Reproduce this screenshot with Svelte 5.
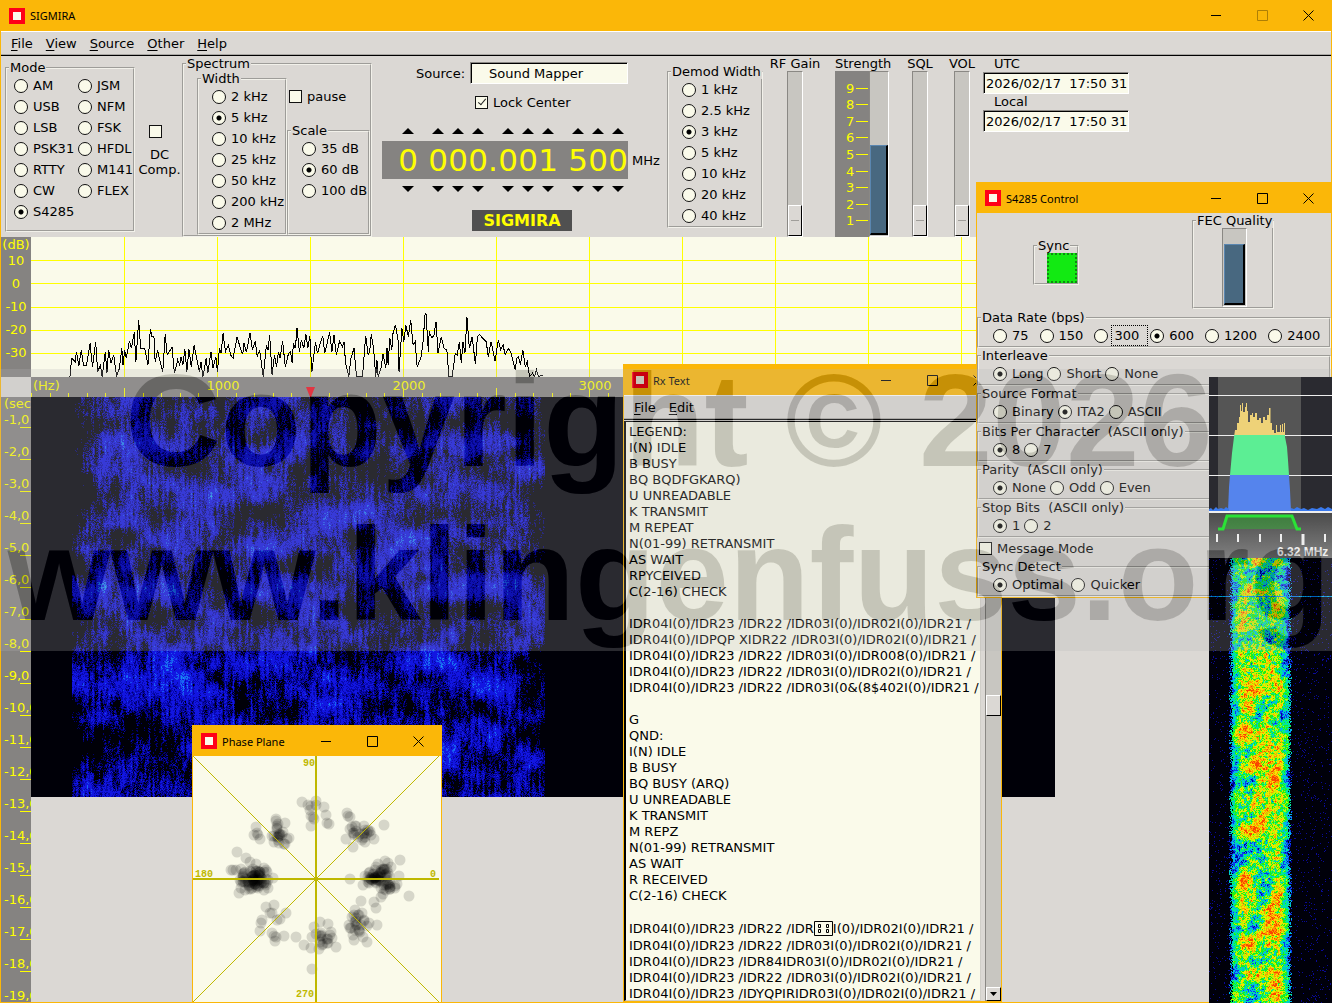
<script lang="ts">
	import { onMount } from 'svelte';

	type Point = [number, number];
	type Cluster = [x: number, y: number, spreadX: number, spreadY: number, count: number];

	const modes = ['AM', 'USB', 'LSB', 'PSK31', 'RTTY', 'CW', 'S4285', 'JSM', 'NFM', 'FSK', 'HFDL', 'M141', 'FLEX'];
	const widths = ['2 kHz', '5 kHz', '10 kHz', '25 kHz', '50 kHz', '200 kHz', '2 MHz'];
	const scales = ['35 dB', '60 dB', '100 dB'];
	const demodWidths = ['1 kHz', '2.5 kHz', '3 kHz', '5 kHz', '10 kHz', '20 kHz', '40 kHz'];
	const frequency = [...'0 000.001 500'];
	const dbLabels = ['10', '0', '-10', '-20', '-30'];
	const secLabels = Array.from({ length: 19 }, (_, i) => `-${i + 1},0`);

	const decoder = [
		{ key: 'interleave', title: 'Interleave', options: ['Long', 'Short', 'None'] },
		{ key: 'format', title: 'Source Format', options: ['Binary', 'ITA2', 'ASCII'] },
		{ key: 'bits', title: 'Bits Per Character  (ASCII only)', options: ['8', '7'] },
		{ key: 'parity', title: 'Parity  (ASCII only)', options: ['None', 'Odd', 'Even'] },
		{ key: 'stop', title: 'Stop Bits  (ASCII only)', options: ['1', '2'] }
	];

	let sel: Record<string, string> = $state({
		mode: 'S4285',
		width: '5 kHz',
		scale: '60 dB',
		demod: '3 kHz',
		rate: '600',
		interleave: 'Long',
		format: 'ITA2',
		bits: '8',
		parity: 'None',
		stop: '1',
		sync: 'Optimal'
	});

	// \u0080 marks an undecodable character, drawn as a boxed glyph
	const rxLines = [
		'LEGEND:',
		'I(N) IDLE',
		'B BUSY',
		'BQ BQDFGKARQ)',
		'U UNREADABLE',
		'K TRANSMIT',
		'M REPEAT',
		'N(01-99) RETRANSMIT',
		'AS WAIT',
		'RPYCEIVED',
		'C(2-16) CHECK',
		'',
		'IDR04I(0)/IDR23 /IDR22 /IDR03I(0)/IDR02I(0)/IDR21 /',
		'IDR04I(0)/IDPQP XIDR22 /IDR03I(0)/IDR02I(0)/IDR21 /',
		'IDR04I(0)/IDR23 /IDR22 /IDR03I(0)/IDR008(0)/IDR21 /',
		'IDR04I(0)/IDR23 /IDR22 /IDR03I(0)/IDR02I(0)/IDR21 /',
		'IDR04I(0)/IDR23 /IDR22 /IDR03I(0&(8$402I(0)/IDR21 /',
		'',
		'G',
		'QND:',
		'I(N) IDLE',
		'B BUSY',
		'BQ BUSY (ARQ)',
		'U UNREADABLE',
		'K TRANSMIT',
		'M REPZ',
		'N(01-99) RETRANSMIT',
		'AS WAIT',
		'R RECEIVED',
		'C(2-16) CHECK',
		'',
		'IDR04I(0)/IDR23 /IDR22 /IDR\u0080I(0)/IDR02I(0)/IDR21 /',
		'IDR04I(0)/IDR23 /IDR22 /IDR03I(0)/IDR02I(0)/IDR21 /',
		'IDR04I(0)/IDR23 /IDR84IDR03I(0)/IDR02I(0)/IDR21 /',
		'IDR04I(0)/IDR23 /IDR22 /IDR03I(0)/IDR02I(0)/IDR21 /',
		'IDR04I(0)/IDR23 /IDYQPIRIDR03I(0)/IDR02I(0)/IDR21 /'
	];

	const trace =
		'174,425 178,370 187,380 190,350 196,393 202,346 208,393 215,393 224,325 230,395 238,322 243,410 250,390 254,425 262,350 266,415 270,345 276,385 283,360 290,425 297,400 303,340 306,390 310,345 314,370 322,318 327,340 334,292 338,380 345,256 350,340 360,340 368,390 374,283 378,305 383,305 386,382 392,345 398,378 405,410 411,298 416,360 428,337 434,415 442,375 447,390 450,365 455,390 460,343 465,410 470,343 476,395 483,330 490,375 496,410 500,380 505,425 513,370 517,415 525,350 530,400 537,365 541,410 546,340 550,355 555,295 561,350 568,330 574,360 580,370 590,305 598,340 604,358 607,323 613,352 622,295 628,345 635,318 640,365 646,345 655,425 663,330 667,345 671,300 677,420 683,360 688,395 693,350 697,370 703,318 710,395 718,355 723,350 727,385 730,325 735,340 739,280 745,350 750,315 756,340 761,297 766,340 771,302 776,412 785,320 790,355 797,325 803,302 808,355 814,325 820,292 826,350 831,300 837,360 845,318 852,335 856,322 860,385 868,425 873,370 881,340 887,425 902,425 910,302 916,360 920,348 924,298 930,345 935,425 938,375 941,425 948,400 953,358 960,400 963,340 966,390 970,308 975,345 978,295 984,270 991,320 993,412 1000,280 1005,320 1010,270 1016,305 1022,255 1028,330 1033,320 1038,395 1047,370 1052,330 1058,235 1060,235 1066,350 1068,290 1075,310 1080,300 1085,260 1090,355 1098,305 1105,340 1112,345 1117,425 1125,425 1133,355 1138,360 1143,320 1148,385 1152,320 1157,355 1162,246 1168,340 1175,305 1183,388 1188,305 1193,298 1200,308 1210,320 1215,365 1222,320 1232,378 1240,315 1246,345 1252,330 1257,360 1265,340 1272,355 1282,405 1286,370 1290,365 1295,390 1301,345 1307,395 1312,380 1318,425 1325,415 1330,425 1335,405 1340,425 1350,420';

	const phaseClusters: Cluster[] = [
		[192, 475, 48, 40, 60],
		[185, 480, 72, 62, 30],
		[547, 475, 36, 24, 26],
		[580, 460, 32, 34, 16],
		[598, 497, 26, 34, 16],
		[575, 480, 60, 74, 14],
		[518, 342, 36, 34, 20],
		[268, 325, 24, 26, 9],
		[265, 358, 28, 28, 12],
		[397, 660, 40, 24, 16],
		[505, 610, 34, 50, 24]
	];
	const phasePoints: Point[] = [
		[337, 246], [362, 258], [377, 242], [360, 270], [403, 260], [368, 290], [372, 298], [362, 288], [408, 285],
		[412, 308], [416, 312], [364, 318], [355, 256], [378, 255], [470, 278], [480, 292], [474, 288], [487, 322],
		[480, 326], [581, 316], [552, 358], [467, 357], [490, 380], [498, 318], [198, 322], [202, 340], [210, 358],
		[192, 345], [204, 345], [259, 298], [284, 310], [296, 355], [142, 397], [167, 413], [129, 450], [228, 562],
		[240, 578], [253, 556], [287, 578], [215, 600], [213, 608], [262, 600], [270, 598], [210, 632], [245, 580],
		[252, 648], [258, 650], [282, 648], [255, 662], [246, 640], [318, 651], [343, 676], [367, 747], [439, 680],
		[390, 607], [413, 612], [372, 622], [366, 650], [388, 688], [362, 685], [514, 544], [553, 546], [559, 565],
		[561, 615], [532, 667], [517, 580], [518, 652], [480, 478], [656, 529], [631, 421], [628, 467], [578, 522],
		[586, 424]
	];

	function makeRandom(seed: number) {
		return () => {
			seed = (seed + 0x6d2b79f5) | 0;
			let t = Math.imul(seed ^ (seed >>> 15), 1 | seed);
			t = (t + Math.imul(t ^ (t >>> 7), 61 | t)) ^ t;
			return ((t ^ (t >>> 14)) >>> 0) / 4294967296;
		};
	}

	function constellation(): Point[] {
		const rnd = makeRandom(4285);
		const pts = [...phasePoints];
		for (const [x, y, sx, sy, n] of phaseClusters) {
			for (let i = 0; i < n; i++) {
				pts.push([x + (rnd() + rnd() - 1) * sx, y + (rnd() + rnd() - 1) * sy]);
			}
		}
		return pts.map(([x, y]) => [Math.round(x / 3 - 3), Math.round(y / 3 - 36)]);
	}
	const dots = constellation();

	// Smooth value noise on a cell grid of cw x ch pixels.
	function makeNoise(seed: number, cw: number, ch: number) {
		const rnd = makeRandom(seed);
		const table = Array.from({ length: 4096 }, rnd);
		const at = (x: number, y: number) => table[(x * 53 + y * 197) & 4095];
		return (px: number, py: number) => {
			const x = px / cw;
			const y = py / ch;
			const xi = Math.floor(x);
			const yi = Math.floor(y);
			const fx = (x - xi) * (x - xi) * (3 - 2 * (x - xi));
			const fy = (y - yi) * (y - yi) * (3 - 2 * (y - yi));
			const a = at(xi, yi) * (1 - fx) + at(xi + 1, yi) * fx;
			const b = at(xi, yi + 1) * (1 - fx) + at(xi + 1, yi + 1) * fx;
			return a * (1 - fy) + b * fy;
		};
	}

	function paint(canvas: HTMLCanvasElement, color: (x: number, y: number) => number[]) {
		const ctx = canvas.getContext('2d')!;
		const img = ctx.createImageData(canvas.width, canvas.height);
		let i = 0;
		for (let y = 0; y < canvas.height; y++) {
			for (let x = 0; x < canvas.width; x++) {
				const [r, g, b] = color(x, y);
				img.data[i++] = r;
				img.data[i++] = g;
				img.data[i++] = b;
				img.data[i++] = 255;
			}
		}
		ctx.putImageData(img, 0, 0);
	}

	let mainFall: HTMLCanvasElement;
	let bandFall: HTMLCanvasElement;

	function paintMain() {
		const rnd = makeRandom(7);
		const patch = makeNoise(11, 46, 24);
		const blotch = makeNoise(12, 14, 14);
		const streak = makeNoise(13, 2, 9);
		const column = makeNoise(14, 2, 2000);
		paint(mainFall, (x, y) => {
			const edge = Math.min(1, (x - 40) / 30, (514 - x) / 26);
			if (edge <= 0) return [0, 0, 8];
			let v = patch(x, y) * 0.62 + blotch(x, y) * 0.42 + streak(x, y) * 0.38 + column(x, y) * 0.22;
			v = (v - 0.66) * 2 + (rnd() - 0.5) * 0.7 - (1 - edge) * 0.45;
			if (v < 0.06) return [0, 0, 8];
			if (v > 1.2) return [24, 70 + (v - 1.2) * 160, 240];
			if (v > 0.6) return [18, 22, 225];
			return v > 0.3 ? [8, 8, 175] : [0, 0, 110];
		});
	}

	const ramp = [
		[0, 0, 8], [0, 0, 150], [10, 60, 235], [0, 180, 235], [0, 235, 150], [30, 240, 20], [190, 245, 0],
		[250, 225, 0], [255, 150, 0], [250, 70, 0]
	];

	function paintBand() {
		const rnd = makeRandom(21);
		const slope = makeNoise(22, 12, 16);
		const fine = makeNoise(23, 3, 3);
		paint(bandFall, (x, y) => {
			if (y === 38) return rnd() > 0.3 ? [0, 120, 240] : [0, 200, 230];
			const left = 19 + rnd() * 5;
			const right = 83 - rnd() * 5;
			if (x < left || x > right) {
				return rnd() > 0.96 ? [10, 10, 150] : [0, 0, 10];
			}
			const edge = Math.min(1, (x - 17) / 15, (85 - x) / 15);
			// the pattern drifts sideways as it scrolls down
			let v = slope(x + y * 0.3, y) * 5 + fine(x, y) * 4.2 + (rnd() - 0.5) * 2.8 + 1;
			v = v * (0.3 + edge * 0.7);
			return ramp[Math.max(1, Math.min(9, Math.round(v)))];
		});
	}

	onMount(() => {
		paintMain();
		paintBand();
	});
</script>

{#snippet radio(key: string, value: string, focused = false)}
	<label class="radio">
		<input type="radio" name={key} {value} bind:group={sel[key]} />
		<span class:focused>{value}</span>
	</label>
{/snippet}

{#snippet titlebar(title: string, locked = false)}
	<header class="titlebar">
		<span class="logo"></span>
		<h2>{title}</h2>
		<div class="winbtns">
			<button aria-label="Minimize">
				<svg width="11" height="11"><path d="M0 5.5h10" /></svg>
			</button>
			<button aria-label="Maximize" disabled={locked}>
				<svg width="11" height="11"><path d="M.5 .5h10v10h-10z" /></svg>
			</button>
			<button aria-label="Close">
				<svg width="11" height="11"><path d="M.5 .5l10 10M10.5 .5l-10 10" /></svg>
			</button>
		</div>
	</header>
{/snippet}

{#snippet menubar(items: string[])}
	<nav class="menubar">
		{#each items as item (item)}
			<button><u>{item[0]}</u>{item.slice(1)}</button>
		{/each}
	</nav>
{/snippet}

<main class="desktop">
	<div class="main-body">
		{@render titlebar('SIGMIRA', true)}
		{@render menubar(['File', 'View', 'Source', 'Other', 'Help'])}

		<section class="controls">
			<fieldset class="mode">
				<legend>Mode</legend>
				<div class="options mode-grid">
					{#each modes as m (m)}{@render radio('mode', m)}{/each}
				</div>
			</fieldset>

			<label class="dc">
				<input type="checkbox" />
				<span>DC<br />Comp.</span>
			</label>

			<fieldset class="spectrum-box">
				<legend>Spectrum</legend>
				<div class="spectrum-cols">
					<fieldset class="width-box">
						<legend>Width</legend>
						<div class="options">
							{#each widths as w (w)}{@render radio('width', w)}{/each}
						</div>
					</fieldset>
					<div class="scale-col">
						<label class="check"><input type="checkbox" />pause</label>
						<fieldset class="scale-box">
							<legend>Scale</legend>
							<div class="options">
								{#each scales as s (s)}{@render radio('scale', s)}{/each}
							</div>
						</fieldset>
					</div>
				</div>
			</fieldset>

			<div class="tuner">
				<label class="source">
					Source:
					<input class="field" type="text" value="Sound Mapper" readonly />
				</label>
				<label class="check lock"><input type="checkbox" checked />Lock Center</label>
				<div class="dial">
					<div class="steps">
						{#each frequency as ch, i (i)}
							{#if /\d/.test(ch)}
								<button aria-label="Digit up"><svg width="12" height="6"><path d="M6 0l6 6H0z" /></svg></button>
							{:else}
								<span class="sep"></span>
							{/if}
						{/each}
					</div>
					<output>{#each frequency as ch, i (i)}<span class:sep={!/\d/.test(ch)}>{ch}</span>{/each}</output>
					<span class="unit">MHz</span>
					<div class="steps">
						{#each frequency as ch, i (i)}
							{#if /\d/.test(ch)}
								<button aria-label="Digit down"><svg width="12" height="6"><path d="M0 0h12L6 6z" /></svg></button>
							{:else}
								<span class="sep"></span>
							{/if}
						{/each}
					</div>
				</div>
				<strong class="brand">SIGMIRA</strong>
			</div>

			<fieldset class="demod">
				<legend>Demod Width</legend>
				<div class="options">
					{#each demodWidths as w (w)}{@render radio('demod', w)}{/each}
				</div>
			</fieldset>

			<label class="gauge rf">RF Gain<input type="range" min="0" max="100" value="0" /></label>
			<div class="gauge strength">
				<span>Strength</span>
				<div class="meter">
					<ol>
						{#each [9, 8, 7, 6, 5, 4, 3, 2, 1] as n (n)}<li>{n}</li>{/each}
					</ol>
					<div class="trough"><div class="level" style:height="55%"></div></div>
				</div>
			</div>
			<label class="gauge sql">SQL<input type="range" min="0" max="100" value="0" /></label>
			<label class="gauge vol">VOL<input type="range" min="0" max="100" value="0" /></label>

			<div class="clocks">
				<label><span>UTC</span><input class="field" type="text" value="2026/02/17  17:50 31" readonly /></label>
				<label><span>Local</span><input class="field" type="text" value="2026/02/17  17:50 31" readonly /></label>
			</div>
		</section>

		<section class="plots">
			<div class="db-scale">
				<span class="db-unit">(dB)</span>
				{#each dbLabels as db (db)}<span>{db}</span>{/each}
			</div>
			<svg class="spectrum" width="1024" height="140">
				{#each [23, 46, 70, 93, 116] as y (y)}
					<path class="grid" d="M0 {y}.5H1024" />
				{/each}
				{#each Array(11) as _, i (i)}
					<path class="grid" d="M{(i + 1) * 93}.5 0V140" />
				{/each}
				<g transform="scale(.4018 .3333) translate(-77 -6)">
					<polyline class="trace" points={trace} />
				</g>
			</svg>
			<div class="corner"></div>
			<svg class="hz-scale" width="1024" height="20">
				<text x="2" y="13">(Hz)</text>
				{#each [1000, 2000, 3000, 4000, 5000] as hz (hz)}
					<text x={hz * 0.186 + 6} y="13" text-anchor="middle">{hz}</text>
				{/each}
				{#each Array(55) as _, i (i)}
					<path class="tick" d="M{Math.round(i * 18.6)}.5 20v-{i % 5 === 0 && i ? 9 : 4}" />
				{/each}
				<path class="marker" d="M275 10h9l-4 10h-1z" />
			</svg>
			<div class="sec-scale">
				<span class="sec-unit">(sec</span>
				{#each secLabels as s (s)}<span>{s}</span>{/each}
			</div>
			<canvas class="fall" bind:this={mainFall} width="1024" height="400"></canvas>
		</section>
	</div>

	<section class="window rx">
		{@render titlebar('Rx Text')}
		{@render menubar(['File', 'Edit'])}
		<div class="rx-body">
			<div class="rx-text">
				{#each rxLines as line, i (i)}
					{@const parts = line.split('\u0080')}
					<p>{parts[0]}{#if parts.length > 1}<svg class="tofu" width="19" height="15"><path d="M.5 .5h18v14h-18zM4.5 3.5h2v3h-2zM12.5 3.5h2v3h-2zM4.5 8.5h2v3h-2zM12.5 8.5h2v3h-2z" /></svg>{parts[1]}{/if}</p>
				{/each}
			</div>
			<div class="scrollbar">
				<div class="thumb"></div>
				<button aria-label="Scroll down"><svg width="7" height="4"><path d="M0 0h7L3.5 4z" /></svg></button>
			</div>
		</div>
	</section>

	<section class="window phase">
		{@render titlebar('Phase Plane')}
		<svg class="plane" viewBox="0 0 248 246">
			{#each dots as [x, y], i (i)}
				<circle cx={x} cy={y} r="5.5" />
			{/each}
			<path class="diag" d="M0 0L246 246M246 0L0 246" />
			<path class="axis" d="M123 0V246M0 123H246" />
			<text x="110" y="10">90</text>
			<text x="2" y="121">180</text>
			<text x="237" y="121">0</text>
			<text x="103" y="241">270</text>
		</svg>
	</section>

	<section class="window s4285">
		{@render titlebar('S4285 Control')}
		<div class="status">
			<fieldset class="sync">
				<legend>Sync</legend>
				<div class="lamp"></div>
			</fieldset>
			<fieldset class="fec">
				<legend>FEC Quality</legend>
				<div class="trough"><div class="level" style:height="80%"></div></div>
			</fieldset>
		</div>
		<fieldset>
			<legend>Data Rate (bps)</legend>
			<div class="options row rates">
				{#each ['75', '150', '300', '600', '1200', '2400'] as r (r)}{@render radio('rate', r, r === '300')}{/each}
			</div>
		</fieldset>
		{#each decoder as group (group.key)}
			<fieldset>
				<legend>{group.title}</legend>
				<div class="options row">
					{#each group.options as o (o)}{@render radio(group.key, o)}{/each}
				</div>
			</fieldset>
		{/each}
		<label class="check message"><input type="checkbox" />Message Mode</label>
		<fieldset>
			<legend>Sync Detect</legend>
			<div class="options row detect">
				{#each ['Optimal', 'Quicker'] as o (o)}{@render radio('sync', o)}{/each}
			</div>
		</fieldset>
	</section>

	<aside class="band">
		<svg width="123" height="181">
			<defs>
				<clipPath id="hump">
					<path d="M19 134L20 110 21 98 23 76 25 60 26 53H28V46H30V40H31V28H32V34H33V26H34V35H36V30H37V26H38V34H39V45H41V38H43V36H44V40H46V36H48V43H50V41H52V46H54V40H56V43H58V38H60V31H61.5V46H63V53H65V56H67V48H68V55H71V48H72V55H73V47H74V55H75V46H76V60L78 70 79 83 80 98 81 113 82 134z" />
				</clipPath>
				<linearGradient id="metal" x1="0" y1="0" x2="0" y2="1">
					<stop offset="0" stop-color="#2c2c2c" />
					<stop offset="1" stop-color="#707070" />
				</linearGradient>
			</defs>
			<rect width="123" height="136" fill="#000008" />
			<rect x="9" width="83" height="134" fill="#383838" />
			<path class="hair" d="M0 18.5H123M0 58.5H123M0 98.5H123" />
			<g clip-path="url(#hump)">
				<rect width="123" height="58" fill="#ffdb66" />
				<rect y="58" width="123" height="40" fill="#42ff8b" />
				<rect y="98" width="123" height="36" fill="#3876fe" />
			</g>
			<path fill="#1668ff" d="M0 134v-2l2-1 2 2 3-3 2 2 3-1 3 1 2-2 3 2v2zM82 134v-3l3 1 3-2 4 2 3-1 4 2 4-2 5 1 4-2 4 2 3-2 4 2v2z" />
			<rect y="134" width="123" height="2" fill="#fff" />
			<rect y="136" width="123" height="45" fill="url(#metal)" />
			<path class="passband" d="M9 152H14L18 139H83L88 152H92" />
			<path class="scale-ticks" d="M8 157v8M29 157v8M51 157v8M72 157v8M116 157v8" />
			<path class="scale-major" d="M94 157v11" />
			<text x="68" y="179">6.32 MHz</text>
		</svg>
		<canvas bind:this={bandFall} width="123" height="445"></canvas>
	</aside>

	<svg class="watermark" width="100%" height="282" aria-hidden="true">
		<mask id="letters">
			<rect width="100%" height="282" fill="#fff" />
			<text x="50%" dx="3" y="97" fill="#000">Copyright © 2026</text>
			<text x="50%" dx="3" y="251" fill="#000">www.klingenfuss.org</text>
		</mask>
		<rect width="100%" height="282" fill="rgb(182 182 182 / 0.23)" mask="url(#letters)" />
		<text x="50%" dx="3" y="97">Copyright © 2026</text>
		<text x="50%" dx="3" y="251">www.klingenfuss.org</text>
	</svg>
</main>

<style>
	:global(body) {
		margin: 0;
	}
	.desktop {
		--face: #dbd8d4;
		--paper: #fafaea;
		--amber: #fbb708;
		--scale: #858381;
		position: relative;
		box-sizing: border-box;
		height: 100vh;
		overflow: hidden;
		background: var(--face);
		color: #000;
		font: 13px/15px 'DejaVu Sans', sans-serif;
	}
	.main-body {
		display: flex;
		flex-direction: column;
		box-sizing: border-box;
		height: 100%;
		border: solid var(--amber);
		border-width: 0 1px 1px;
	}
	button {
		padding: 0;
		border: 0;
		background: none;
		color: inherit;
		font: inherit;
	}
	svg {
		display: block;
	}

	/* title bars and menus */
	.titlebar {
		display: flex;
		flex: none;
		align-items: center;
		height: 30px;
		padding-left: 8px;
		background: var(--amber);
	}
	.main-body > .titlebar {
		height: 31px;
	}
	.logo {
		width: 8px;
		height: 8px;
		border: 4px solid #ff0018;
		background: var(--paper);
	}
	h2 {
		flex: 1;
		margin: 0 0 0 5px;
		font: 11px/15px 'Noto Sans', sans-serif;
		white-space: nowrap;
	}
	.winbtns {
		display: flex;
	}
	.winbtns button {
		display: grid;
		place-items: center;
		width: 46px;
		height: 30px;
	}
	.winbtns path {
		fill: none;
		stroke: #000;
	}
	.winbtns button:disabled {
		opacity: 0.3;
	}
	.menubar {
		display: flex;
		flex: none;
		gap: 13px;
		box-sizing: border-box;
		height: 25px;
		padding-left: 10px;
		border-top: 1px solid #fff;
		border-bottom: 1px solid #000;
		box-shadow: inset 0 -1px #a9a7a3;
	}
	.menubar u {
		text-underline-offset: 2px;
	}

	/* form controls */
	fieldset {
		box-sizing: border-box;
		min-width: 0;
		margin: 0;
		padding: 0 0 0 2px;
		border: 2px groove #f2f1ea;
	}
	legend {
		padding: 0 1px;
		line-height: 15px;
		white-space: pre;
	}
	.options {
		padding-left: 11px;
	}
	.radio,
	.check {
		display: flex;
		align-items: center;
		height: 21px;
		gap: 5px;
		white-space: nowrap;
	}
	input[type='radio'],
	input[type='checkbox'] {
		flex: none;
		appearance: none;
		box-sizing: border-box;
		width: 14px;
		height: 14px;
		margin: 0;
		border: 1px solid #111;
		background: var(--paper);
	}
	input[type='radio'] {
		border-radius: 50%;
	}
	input[type='radio']:checked {
		background: radial-gradient(circle, #000 0 2px, var(--paper) 3px);
	}
	input[type='checkbox'] {
		width: 13px;
		height: 13px;
	}
	input[type='checkbox']:checked::after {
		content: '';
		display: block;
		box-sizing: border-box;
		width: 4px;
		height: 8px;
		margin: 0 0 0 4px;
		border: solid #222;
		border-width: 0 1px 1px 0;
		transform: rotate(40deg);
	}
	.focused {
		padding: 2px 8px 2px 2px;
		margin: 0 -8px 0 -1px;
		outline: 1px dotted #000;
	}
	.field {
		box-sizing: border-box;
		height: 22px;
		border: 1px solid;
		border-color: #8a8884 #fff #fff #8a8884;
		box-shadow: inset 1px 1px #000;
		background: var(--paper);
		color: #000;
		font: inherit;
		white-space: pre;
	}

	/* control strip */
	.controls {
		display: flex;
		flex: none;
		align-items: flex-start;
		height: 181px;
		padding-left: 4px;
	}
	.controls > * {
		flex: none;
	}
	.mode {
		width: 130px;
		margin-top: 4px;
		padding-bottom: 8px;
	}
	.mode-grid {
		display: grid;
		grid-template: repeat(7, 21px) / 64px auto;
		grid-auto-flow: column;
		padding-left: 5px;
	}
	.dc {
		display: flex;
		flex-direction: column;
		align-items: center;
		gap: 9px;
		box-sizing: border-box;
		width: 47px;
		padding: 69px 0 0 2px;
		text-align: center;
	}
	.dc input {
		margin-right: 8px;
	}
	.spectrum-box {
		width: 190px;
	}
	.spectrum-cols {
		display: flex;
		padding-left: 11px;
	}
	.width-box {
		flex: none;
		width: 90px;
	}
	.scale-col {
		display: flex;
		flex: 1;
		flex-direction: column;
		padding-top: 15px;
	}
	.scale-col .check {
		margin-left: 2px;
	}
	.scale-box {
		flex: 1;
		margin-top: 16px;
	}
	.tuner {
		width: 278px;
		margin-left: 10px;
		padding-top: 6px;
	}
	.source {
		display: flex;
		align-items: center;
		gap: 5px;
		padding-left: 34px;
	}
	.source .field {
		width: 158px;
		padding: 0 0 0 18px;
	}
	.lock {
		margin: 8px 0 8px 93px;
	}
	.dial {
		display: grid;
		grid-template-columns: 246px auto;
		column-gap: 4px;
		align-items: center;
	}
	.steps {
		display: flex;
		grid-column: 1 / -1;
		height: 20px;
		padding-left: 16px;
	}
	.steps button {
		display: grid;
		place-items: center;
		width: 20px;
	}
	.sep {
		width: 10px;
	}
	output {
		display: flex;
		box-sizing: border-box;
		height: 38px;
		padding-left: 16px;
		background: var(--scale);
		color: #ff0;
		font-size: 31px;
		line-height: 38px;
	}
	output span {
		flex: none;
		width: 20px;
		text-align: center;
		white-space: pre;
	}
	output .sep {
		width: 10px;
	}
	.brand {
		display: block;
		width: 100px;
		margin: 11px 0 0 90px;
		background: #505050;
		color: #ff0;
		font-size: 16px;
		line-height: 21px;
		text-align: center;
	}
	.demod {
		width: 96px;
		margin: 8px 0 0 7px;
	}
	.gauge {
		display: flex;
		flex-direction: column;
		align-items: center;
		height: 181px;
		white-space: nowrap;
	}
	.rf {
		width: 48px;
		margin-left: 8px;
	}
	.strength {
		align-items: flex-start;
		width: 56px;
		margin-left: 16px;
	}
	.sql,
	.vol {
		width: 26px;
		margin-left: 16px;
	}
	input[type='range'] {
		appearance: none;
		writing-mode: vertical-lr;
		direction: rtl;
		box-sizing: border-box;
		width: 16px;
		height: 166px;
		margin: 0;
		border: 1px solid;
		border-color: #8a8884 #fff #fff #8a8884;
		background: #c8c6c1;
	}
	input[type='range']::-webkit-slider-thumb {
		appearance: none;
		box-sizing: border-box;
		width: 14px;
		height: 31px;
		border: 1px solid;
		border-color: #fff #000 #000 #fff;
		background: linear-gradient(#a09e9a, #a09e9a) center / 8px 1px no-repeat, #dbd8d4;
	}
	.meter {
		display: flex;
		width: 54px;
		height: 166px;
	}
	ol {
		display: flex;
		flex: 1;
		flex-direction: column;
		margin: 0;
		padding: 9px 0 8px 11px;
		background: var(--scale);
		color: #ff0;
		list-style: none;
	}
	li {
		display: flex;
		flex: 1;
		align-items: center;
		gap: 2px;
	}
	li::after {
		content: '';
		flex: 1;
		height: 1px;
		margin-right: 1px;
		background: #ff0;
	}
	.trough {
		display: flex;
		flex-direction: column;
		justify-content: flex-end;
		box-sizing: border-box;
		width: 20px;
		padding-bottom: 1px;
		border: 1px solid;
		border-color: #8a8884 #fff #fff #8a8884;
		background: #c8c6c1;
	}
	.level {
		box-sizing: border-box;
		border: solid;
		border-width: 1px 2px 2px 1px;
		border-color: #5a86b0 #000 #000 #5a86b0;
		background: #486880;
	}
	.clocks {
		width: 146px;
		margin-left: 8px;
	}
	.clocks label {
		display: flex;
		flex-direction: column;
	}
	.clocks span {
		padding-left: 11px;
		line-height: 16px;
	}
	.clocks .field {
		padding: 0 0 0 2px;
	}

	/* spectrum and waterfall */
	.plots {
		display: grid;
		flex: 1;
		grid-template: 140px 20px minmax(0, 1fr) / 30px minmax(0, 1024px);
		min-height: 0;
	}
	.db-scale,
	.sec-scale {
		display: flex;
		flex-direction: column;
		overflow: hidden;
		background: var(--scale);
		color: #ff0;
		text-align: center;
	}
	.db-scale span {
		line-height: 23px;
	}
	.db-scale .db-unit {
		height: 12px;
		line-height: 16px;
	}
	.spectrum {
		background: var(--paper);
	}
	.grid,
	.tick {
		fill: none;
		stroke: #ff0;
	}
	.trace {
		fill: none;
		stroke: #000;
		shape-rendering: crispEdges;
		vector-effect: non-scaling-stroke;
	}
	.hz-scale {
		background: var(--scale);
		fill: #ff0;
	}
	.marker {
		fill: #f01020;
	}
	.sec-scale {
		text-align: left;
	}
	.sec-scale span {
		flex: none;
		height: 32px;
		padding-left: 3px;
		background: linear-gradient(#ff0, #ff0) right 22px / 11px 1px no-repeat;
		line-height: 30px;
		white-space: nowrap;
	}
	.sec-scale .sec-unit {
		height: 8px;
		background: none;
		line-height: 13px;
	}
	canvas {
		display: block;
	}

	/* floating windows */
	.window {
		position: absolute;
		box-sizing: border-box;
		border: 1px solid var(--amber);
		background: var(--face);
	}
	.rx {
		top: 364px;
		bottom: 1px;
		left: 623px;
		display: flex;
		flex-direction: column;
		width: 379px;
	}
	.rx-body {
		display: flex;
		flex: 1;
		gap: 4px;
		min-height: 0;
		margin-top: 1px;
	}
	.rx-text {
		flex: 1;
		padding: 2px 3px;
		overflow: hidden;
		border: solid;
		border-width: 1px 1px 1px 2px;
		border-color: #000 #d0cec8 #d0cec8 #000;
		background: var(--paper);
	}
	.rx-text p {
		display: flex;
		align-items: center;
		min-height: 16px;
		margin: 0;
		line-height: 16px;
		white-space: pre;
	}
	.tofu {
		margin: 1px 0 2px;
		fill: none;
		stroke: #000;
	}
	.scrollbar {
		display: flex;
		flex-direction: column;
		width: 16px;
		background: #c8c6c1;
		box-shadow: inset 1px 0 #8a8884;
	}
	.thumb,
	.scrollbar button {
		box-sizing: border-box;
		width: 15px;
		margin-left: 1px;
		border: 1px solid;
		border-color: #fff #000 #000 #fff;
		background: var(--face);
	}
	.thumb {
		height: 21px;
		margin-top: 274px;
	}
	.scrollbar button {
		display: grid;
		place-items: center;
		height: 14px;
		margin-top: auto;
	}
	.phase {
		top: 725px;
		left: 192px;
		width: 250px;
	}
	.plane {
		width: 100%;
		background: var(--paper);
		font: bold 10px 'Liberation Mono', monospace;
		fill: #bfb800;
	}
	.plane circle {
		fill: rgb(0 0 0 / 0.14);
	}
	.plane path {
		fill: none;
		stroke: #bfb800;
	}
	.plane .axis {
		stroke-width: 2;
	}
	.s4285 {
		top: 182px;
		right: 0;
		width: 356px;
	}
	.status {
		display: flex;
		align-items: flex-start;
		height: 97px;
	}
	.sync {
		width: 46px;
		margin: 25px 0 0 56px;
	}
	.lamp {
		width: 30px;
		height: 30px;
		margin-left: auto;
		box-sizing: border-box;
		border: 2px dotted #0c8c10;
		background: #12ea12;
	}
	.fec {
		width: 82px;
		margin-left: 113px;
	}
	.fec .trough {
		width: 25px;
		height: 79px;
		margin: 0 auto;
		padding: 0 1px 1px;
	}
	.row {
		display: flex;
		gap: 4px;
		padding-left: 12px;
	}
	.rates {
		gap: 11px;
	}
	.detect {
		gap: 8px;
	}
	.message {
		padding-left: 2px;
	}
	.band {
		position: absolute;
		top: 377px;
		right: 0;
		bottom: 0;
		display: flex;
		flex-direction: column;
		width: 123px;
	}
	.band svg {
		flex: none;
		font: bold 12px 'Liberation Sans', sans-serif;
		fill: #fff;
	}
	.band canvas {
		flex: 1;
		min-height: 0;
	}
	.hair,
	.scale-ticks {
		stroke: #fff;
	}
	.scale-ticks {
		stroke-width: 2;
	}
	.scale-major {
		stroke: #fff;
		stroke-width: 3;
	}
	.passband {
		fill: rgb(0 200 0 / 0.4);
		stroke: #00f010;
		stroke-width: 3;
	}
	.watermark {
		position: absolute;
		top: 369px;
		left: 0;
		font: bold 132px 'Liberation Sans', Arial, sans-serif;
		text-anchor: middle;
		fill: rgb(0 0 0 / 0.21);
		pointer-events: none;
	}
</style>
